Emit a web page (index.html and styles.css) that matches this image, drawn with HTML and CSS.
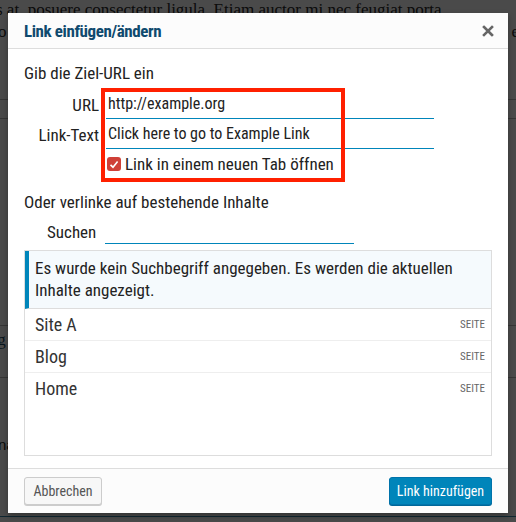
FILE: index.html
```html
<!DOCTYPE html>
<html lang="de">
<head>
<meta charset="utf-8">
<title>Link einfügen/ändern</title>
<link rel="stylesheet" href="styles.css">
</head>
<body>
<div class="page">
  <p class="bg-line bg-first">s at, posuere consectetur ligula. Etiam auctor mi nec feugiat porta.</p>
  <p class="bg-line bg-second"><span>o</span><span>e</span></p>
  <div class="bg-rule r1"></div>
  <div class="bg-rule r2"></div>
  <div class="bg-rule r3"></div>
  <p class="bg-line bg-link"><a>rg</a></p>
  <div class="bg-rule r4"></div>
  <p class="bg-line bg-na">na</p>
  <div class="bg-bottom"></div>
</div>
<div class="overlay"></div>

<div class="dialog">
  <div class="dlg-head">
    <h1 class="dlg-title">Link einfügen/ändern</h1>
    <button class="dlg-close" aria-label="Schließen">
      <svg width="12" height="12" viewBox="0 0 12 12"><path d="M2 2 L10 10 M10 2 L2 10" stroke="#666" stroke-width="2.6" stroke-linecap="square"/></svg>
    </button>
  </div>

  <div class="dlg-body">
    <p class="section-title">Gib die Ziel-URL ein</p>
    <div class="url-fields">
      <div class="field-row">
        <label class="field-label">URL</label>
        <div class="field-input">http://example.org</div>
      </div>
      <div class="field-row row-two">
        <label class="field-label">Link-Text</label>
        <div class="field-input">Click here to go to Example Link</div>
      </div>
      <div class="field-row check-row">
        <span class="field-label"></span>
        <label class="check">
          <span class="checkbox">
            <svg width="10" height="9" viewBox="0 0 10 9"><path d="M1.5 4.8 L4 7.2 L8.6 1.6" fill="none" stroke="#fff" stroke-width="1.6"/></svg>
          </span>
          Link in einem neuen Tab öffnen
        </label>
      </div>
      <div class="highlight"></div>
    </div>

    <p class="section-title second">Oder verlinke auf bestehende Inhalte</p>
    <div class="search-row">
      <label class="search-label">Suchen</label>
      <div class="search-input"></div>
    </div>

    <div class="results">
      <div class="notice">Es wurde kein Suchbegriff angegeben. Es werden die aktuellen Inhalte angezeigt.</div>
      <ul class="result-list">
        <li><span class="item-title">Site A</span><span class="item-type">SEITE</span></li>
        <li><span class="item-title">Blog</span><span class="item-type">SEITE</span></li>
        <li><span class="item-title">Home</span><span class="item-type">SEITE</span></li>
      </ul>
    </div>
  </div>

  <div class="dlg-foot">
    <button class="btn btn-secondary">Abbrechen</button>
    <button class="btn btn-primary">Link hinzufügen</button>
  </div>
</div>
</body>
</html>
```

FILE: styles.css
```css
html, body {
  margin: 0;
  padding: 0;
}
body {
  width: 516px;
  height: 522px;
  overflow: hidden;
  background: #fff;
  font-family: "Roboto Condensed", "Liberation Sans Narrow", "DejaVu Sans Condensed", "DejaVu Sans", sans-serif;
  font-stretch: condensed;
  position: relative;
}

/* background page */
.page {
  position: relative;
  height: 522px;
  font-family: "Liberation Serif", "DejaVu Serif", serif;
  font-stretch: normal;
  color: #2a2a2a;
  font-size: 17px;
}
.bg-line {
  position: absolute;
  margin: 0;
  white-space: nowrap;
}
.bg-first { left: -4px; top: 0; }
.bg-second { left: -2px; right: -3px; top: 22px; display: flex; justify-content: space-between; }
.bg-link { left: -8px; top: 330px; }
.bg-link a { text-decoration: underline; color: #1a4a66; }
.bg-na { left: -2px; top: 436px; font-size: 15px; font-family: "Liberation Sans", sans-serif; }
.bg-rule { position: absolute; left: 0; right: 0; height: 1px; background: #bbb; }
.r1 { top: 99px; }
.r2 { top: 118px; }
.r3 { top: 325px; }
.r4 { top: 377px; }
.bg-bottom { position: absolute; left: 0; right: 0; top: 516px; height: 1px; background: #3a86a8; }

.overlay {
  position: absolute;
  inset: 0;
  background: rgba(0, 0, 0, 0.71);
}

/* dialog */
.dialog {
  position: absolute;
  left: 8px;
  top: 13px;
  width: 500px;
  height: 500px;
  background: #fff;
  display: flex;
  flex-direction: column;
  box-shadow: 0 3px 6px rgba(0,0,0,0.3);
}
.dlg-head {
  height: 35px;
  background: #fcfcfc;
  border-bottom: 1px solid #ddd;
  display: flex;
  align-items: center;
  justify-content: space-between;
  padding: 0 14px 0 16px;
  flex-shrink: 0;
}
.dlg-title {
  margin: 0;
  font-size: 17px;
  font-weight: bold;
  color: #0f4a6e;
  letter-spacing: -0.4px;
}
.dlg-close {
  background: none;
  border: 0;
  padding: 0;
  width: 12px;
  height: 12px;
  display: flex;
}

.dlg-body {
  flex: 1;
  padding: 0 16px;
  color: #222;
  font-size: 17px;
}
.section-title {
  margin: 13px 0 0;
  line-height: 22px;
}
.section-title.second { margin-top: 12px; }

.url-fields {
  position: relative;
  margin-top: 4px;
  display: flex;
  flex-direction: column;
}
.field-row {
  display: flex;
  align-items: flex-end;
  height: 31px;
}
.field-row.row-two { height: 30px; }
.field-label {
  width: 75px;
  text-align: right;
  padding-right: 7px;
  line-height: 24px;
  padding-bottom: 2px;
  flex-shrink: 0;
}
.field-input {
  width: 326px;
  border-bottom: 1px solid #0085ba;
  padding: 0 0 2px 2px;
  line-height: 24px;
  font-size: 16px;
  white-space: nowrap;
}
.check-row {
  height: 30px;
  align-items: center;
}
.check {
  display: flex;
  align-items: center;
  gap: 4px;
  margin-left: 1px;
  line-height: 22px;
}
.checkbox {
  width: 14px;
  height: 14px;
  border-radius: 3px;
  background: #cf4038;
  display: flex;
  align-items: center;
  justify-content: center;
}
.highlight {
  position: absolute;
  left: 77px;
  top: 0;
  width: 236px;
  height: 86px;
  border: 4px solid #ff2000;
}

.search-row {
  display: flex;
  align-items: flex-end;
  margin-top: 7px;
  padding-left: 23px;
  height: 24px;
}
.search-label {
  width: 51px;
  line-height: 22px;
  padding-bottom: 1px;
}
.search-input {
  margin-left: 7px;
  width: 249px;
  border-bottom: 1px solid #0085ba;
}

.results {
  margin-top: 6px;
  height: 204px;
  border: 1px solid #ddd;
}
.notice {
  background: #f5fafd;
  border-left: 4px solid #0085ba;
  border-bottom: 1px solid #ddd;
  padding: 6px 6px 7px 6px;
  line-height: 22px;
}
.result-list {
  list-style: none;
  margin: 0;
  padding: 0;
}
.result-list li {
  height: 31px;
  border-bottom: 1px solid #eee;
  display: flex;
  align-items: center;
  justify-content: space-between;
  padding: 0 6px 0 10px;
  color: #333;
}
.result-list li:last-child { border-bottom: 0; }
.item-title { font-size: 18px; }
.item-type {
  font-size: 11px;
  color: #666;
}

.dlg-foot {
  height: 45px;
  border-top: 1px solid #ddd;
  background: #fcfcfc;
  display: flex;
  align-items: flex-start;
  justify-content: space-between;
  padding: 8px 16px 0;
  box-sizing: border-box;
  flex-shrink: 0;
}
.btn {
  height: 28px;
  border-radius: 3px;
  font-family: inherit;
  font-stretch: condensed;
  font-size: 14px;
  padding: 0;
  line-height: 26px;
  white-space: nowrap;
}
.btn-secondary {
  width: 78px;
  background: #f7f7f7;
  border: 1px solid #ccc;
  box-shadow: 0 1px 0 #ccc;
  color: #555;
}
.btn-primary {
  width: 103px;
  background: #0085ba;
  border: 1px solid #0073aa;
  box-shadow: 0 1px 0 #006799;
  color: #fff;
}
```
